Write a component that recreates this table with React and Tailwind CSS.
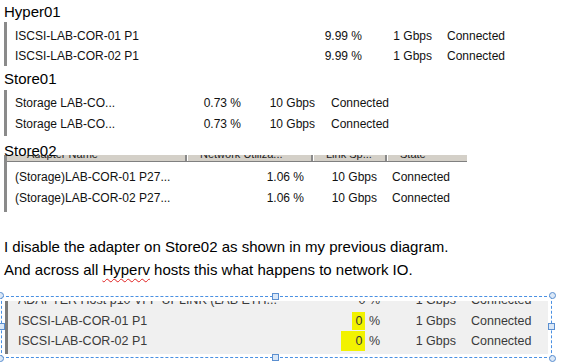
import React from 'react';

const ui = { fontFamily: '"Liberation Sans", Arial, sans-serif' };
const doc = { fontFamily: '"Liberation Sans", "Open Sans", sans-serif' };

function Row({ cols, name, pct, speed, state, h = 'h-5' }) {
  return (
    <div className={`flex items-center ${h} whitespace-nowrap`}>
      <span className="shrink-0" style={{ width: cols[0] }}>{name}</span>
      <span className="shrink-0 text-right" style={{ width: cols[1] }}>{pct}</span>
      <span className="shrink-0 text-right" style={{ width: cols[2] }}>{speed}</span>
      <span className="shrink-0" style={{ paddingLeft: cols[3] }}>{state}</span>
    </div>
  );
}

function Label({ children, className = '' }) {
  return (
    <div className={`pl-1 text-[15px] leading-none text-black ${className}`} style={doc}>
      {children}
    </div>
  );
}

function Handle({ pos, round }) {
  return (
    <span
      className={`absolute w-[7px] h-[7px] bg-[#dbe8f7] border border-[#5b8fd0] ${round ? 'rounded-full' : ''} ${pos}`}
    />
  );
}

export default function App() {
  const c1 = [290, 57, 70, 15];
  const c2 = [176, 50, 74, 16];
  const c3 = [236, 53, 73, 15];
  const c4 = [276, 86, 76, 15];

  return (
    <div className="w-[562px] h-[363px] bg-white overflow-hidden relative">
      {/* Hyper01 */}
      <Label className="pt-[4px] h-[22px]">Hyper01</Label>
      <div className="ml-1 border-l-[3px] border-[#8a8a8a] pl-2 pt-1 h-[44px] text-[12px] text-[#111]" style={ui}>
        <Row cols={c1} name="ISCSI-LAB-COR-01 P1" pct="9.99 %" speed="1 Gbps" state="Connected" />
        <Row cols={c1} name="ISCSI-LAB-COR-02 P1" pct="9.99 %" speed="1 Gbps" state="Connected" />
      </div>

      {/* Store01 */}
      <Label className="pt-[5px] h-[24px]">Store01</Label>
      <div className="ml-1 border-l-[3px] border-[#8a8a8a] pl-2 pt-[2px] h-[46px] text-[12px] text-[#111]" style={ui}>
        <Row cols={c2} name="Storage LAB-CO..." pct="0.73 %" speed="10 Gbps" state="Connected" h="h-[21px]" />
        <Row cols={c2} name="Storage LAB-CO..." pct="0.73 %" speed="10 Gbps" state="Connected" h="h-[21px]" />
      </div>

      {/* Store02 */}
      <Label className="pt-[7px] h-[19px]">Store02</Label>
      <div className="ml-1 border-l-[3px] border-[#8a8a8a] h-[57px] text-[12px] text-[#111]" style={ui}>
        <div className="flex h-[7px] w-[460px] overflow-hidden bg-[#d4d0c8] border-b border-[#808080] text-[11px] text-[#222]">
          <div className="w-[180px] border-r-2 border-r-[#8a8a8a] pl-5 -mt-[9px]">Adapter Name</div>
          <div className="w-[126px] border-l border-white border-r-2 border-r-[#8a8a8a] pl-3 -mt-[9px]">Network Utiliza...</div>
          <div className="w-[74px] border-l border-white border-r-2 border-r-[#8a8a8a] pl-3 -mt-[9px]">Link Sp...</div>
          <div className="flex-1 border-l border-white pl-3 -mt-[9px]">State</div>
        </div>
        <div className="pl-2 pt-[4px]">
          <Row cols={c3} name="(Storage)LAB-COR-01 P27..." pct="1.06 %" speed="10 Gbps" state="Connected" h="h-[21px]" />
          <Row cols={c3} name="(Storage)LAB-COR-02 P27..." pct="1.06 %" speed="10 Gbps" state="Connected" h="h-[21px]" />
        </div>
      </div>

      {/* Paragraph */}
      <div className="pl-1 pt-[23px] text-[15px] leading-[23px] text-black" style={doc}>
        <p>I disable the adapter on Store02 as shown in my previous diagram.</p>
        <p>
          And across all{' '}
          <span className="underline decoration-wavy decoration-[#e02020] decoration-1 underline-offset-[3px]">Hyperv</span>{' '}
          hosts this what happens to network IO.
        </p>
      </div>

      {/* Pasted image with selection */}
      <div className="relative mt-[15px] ml-[1px] w-[551px] h-[62px] border border-dashed border-[#4a90e2]">
        <div className="mt-[4px] ml-[3px] w-[543px] h-[53px] bg-[#f0f0f0] border-l-[3px] border-[#7a7a7a] pl-[10px] text-[12.5px] text-[#3a3a3a]" style={ui}>
          <div className="h-[7px] overflow-hidden">
            <div className="-mt-[10px]">
              <Row cols={c4} name="ADAPTER Host p10 VFP UPLINK (LAB ETH..." pct="0 %" speed="1 Gbps" state="Connected" h="h-[18px]" />
            </div>
          </div>
          <div className="pt-[3px]">
            <Row
              cols={c4}
              name="ISCSI-LAB-COR-01 P1"
              pct={<><span className="bg-[#f2f200] px-[3px] py-[2px]">0</span> %</>}
              speed="1 Gbps"
              state="Connected"
            />
            <Row
              cols={c4}
              name="ISCSI-LAB-COR-02 P1"
              pct={<><span className="bg-[#f2f200] pl-[14px] pr-[3px] py-[3px]">0</span> %</>}
              speed="1 Gbps"
              state="Connected"
            />
          </div>
        </div>
        <Handle round pos="-left-[5px] -top-[5px]" />
        <Handle round pos="-right-[5px] -top-[5px]" />
        <Handle round pos="-left-[5px] -bottom-[5px]" />
        <Handle round pos="-right-[5px] -bottom-[5px]" />
        <Handle pos="left-[270px] -top-[4px]" />
        <Handle pos="left-[270px] -bottom-[4px]" />
        <Handle pos="-left-[4px] top-[26px]" />
        <Handle pos="-right-[4px] top-[26px]" />
      </div>
    </div>
  );
}
